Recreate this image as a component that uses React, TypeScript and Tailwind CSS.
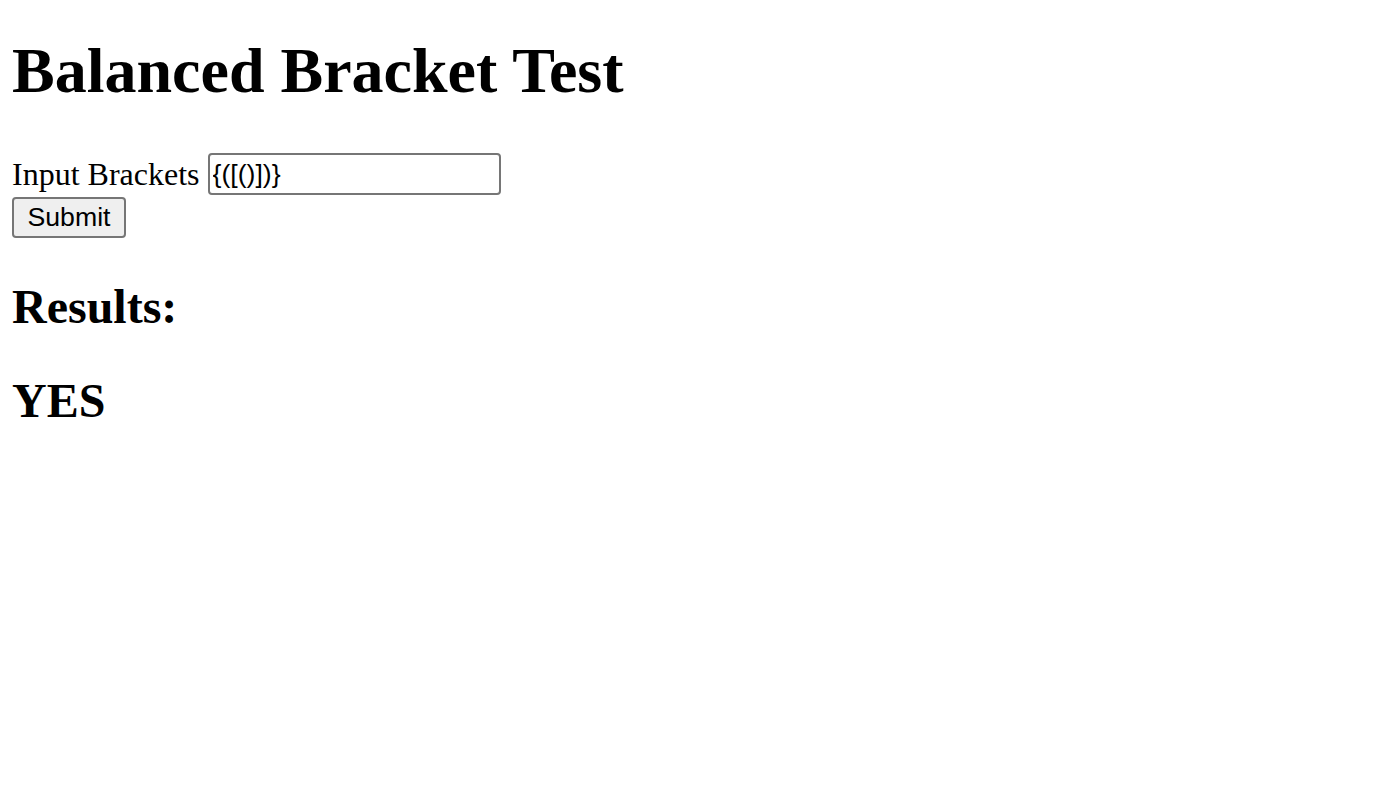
import React, { useState } from 'react';

const isBalanced = (s: string) => {
    const pairs: Record<string, string> = { ')': '(', ']': '[', '}': '{' };
    const stack: string[] = [];
    for (const ch of s) {
        if ('([{'.includes(ch)) stack.push(ch);
        else if (pairs[ch]) {
            if (stack.pop() !== pairs[ch]) return false;
        }
    }
    return stack.length === 0;
};

const App: React.FC = () => {
    const [value, setValue] = useState('{([()])}');
    const [result, setResult] = useState(isBalanced('{([()])}') ? 'YES' : 'NO');

    return (
        <div className="min-h-[800px] bg-white pl-[12px] pt-[34px] text-black" style={{ fontFamily: '"Liberation Serif", "Times New Roman", serif' }}>
            <h1 className="text-[64px] font-bold leading-[74px]">Balanced Bracket Test</h1>

            <form
                className="mt-[45px]"
                onSubmit={(e) => {
                    e.preventDefault();
                    setResult(isBalanced(value) ? 'YES' : 'NO');
                }}
            >
                <div className="flex items-start">
                    <label htmlFor="brackets" className="mt-[3px] text-[32px] leading-[37px]">
                        Input Brackets
                    </label>
                    <input
                        id="brackets"
                        type="text"
                        value={value}
                        onChange={(e) => setValue(e.target.value)}
                        className="ml-[8px] h-[42px] w-[293px] rounded-[4px] border-2 border-[#767676] bg-white px-[3px] text-[26.67px] text-black outline-none"
                        style={{ fontFamily: '"Liberation Sans", Arial, sans-serif' }}
                    />
                </div>
                <button
                    type="submit"
                    className="mt-[2px] h-[41px] w-[114px] rounded-[4px] border-2 border-[#767676] bg-[#efefef] text-[26.67px] leading-none text-black"
                    style={{ fontFamily: '"Liberation Sans", Arial, sans-serif' }}
                >
                    Submit
                </button>
            </form>

            <h2 className="mt-[41px] text-[48px] font-bold leading-[55px]">Results:</h2>
            <h2 className="mt-[39px] text-[48px] font-bold leading-[55px]">{result}</h2>
        </div>
    );
};

export default App;
